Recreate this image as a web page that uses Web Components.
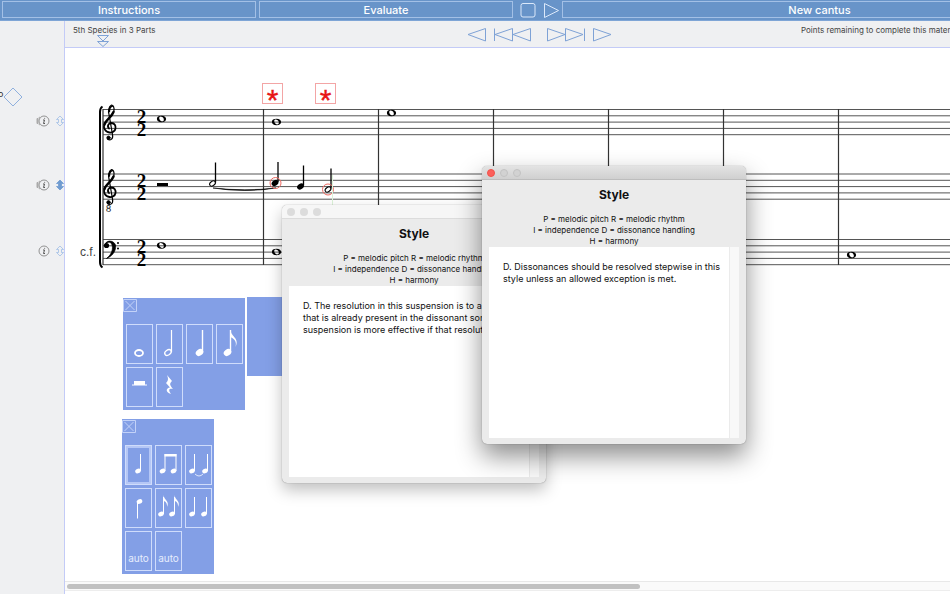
<!DOCTYPE html>
<html lang="en">
<head>
<meta charset="utf-8">
<title>5th Species in 3 Parts</title>
<style>
  html, body { height: 100%; }
  body {
    margin: 0;
    overflow: hidden;
    background: #fff;
    color: #111;
    font-family: Inter, "Liberation Sans", sans-serif;
  }
</style>
</head>
<body>
<counterpoint-app>
  <tool-bar slot="toolbar"></tool-bar>
  <part-rail slot="rail"></part-rail>
  <exercise-header slot="header" heading="5th Species in 3 Parts">Points remaining to complete this material: 20</exercise-header>
  <score-sheet slot="canvas"></score-sheet>
  <note-palette slot="canvas" class="durations" columns="4" label="Durations" items="whole half quarter eighth rest-half rest-quarter"></note-palette>
  <note-palette slot="canvas" class="options" columns="3" label="Options" selected="stem-up" items="stem-up beam tie stem-down flags pair auto auto"></note-palette>
  <style-window slot="canvas" class="first">D. The resolution in this suspension is to a pitch that is already present in the dissonant sonority. A suspension is more effective if that resolution fits.</style-window>
  <style-window slot="canvas" class="second" active>D. Dissonances should be resolved stepwise in this style unless an allowed exception is met.</style-window>
</counterpoint-app>

<script>
// app shell
class CounterpointApp extends HTMLElement {
  constructor() {
    super();
    this.attachShadow({ mode: 'open' });
    this.shadowRoot.innerHTML = `
      <style>
        :host { display: flex; flex-direction: column; height: 100vh; overflow: hidden; }
        .body { display: flex; flex: 1; min-height: 0; }
        main {
          display: flex;
          flex-direction: column;
          flex: 1;
          min-width: 0;
          border-left: 1px solid #c3cbf7;
        }
        .canvas { position: relative; flex: 1; min-height: 0; }
        .backdrop { position: absolute; left: 182px; top: 249px; width: 122px; height: 79px; background: #839fe6; }
        .track { height: 10px; padding: 2px; box-sizing: border-box; background: #fafafa; border-top: 1px solid #e8e8e8; border-bottom: 1px solid #ededed; margin-bottom: 3px; }
        .thumb { width: 65%; height: 5px; border-radius: 3px; background: #c1c1c1; }
        ::slotted(*) { flex: none; }
        ::slotted(note-palette), ::slotted(style-window) { position: absolute; }
        ::slotted(.durations) { left: 58px; top: 250px; }
        ::slotted(.options) { left: 57px; top: 371px; }
        ::slotted(.first) { left: 217px; top: 157px; }
        ::slotted(.second) { left: 417px; top: 118px; }
      </style>
      <slot name="toolbar"></slot>
      <div class="body">
        <slot name="rail"></slot>
        <main>
          <slot name="header"></slot>
          <div class="canvas">
            <div class="backdrop"></div>
            <slot name="canvas"></slot>
          </div>
          <div class="track"><div class="thumb"></div></div>
        </main>
      </div>
    `;
  }
}

// blue bar across the top
class ToolBar extends HTMLElement {
  constructor() {
    super();
    this.attachShadow({ mode: 'open' });
    this.shadowRoot.innerHTML = `
      <style>
        :host {
          display: flex;
          gap: 3px;
          height: 21px;
          padding: 1px 2px 2px;
          box-sizing: border-box;
          background: #6894c9;
          border-bottom: 1px solid #7ea5d6;
        }
        button {
          flex: none;
          box-sizing: border-box;
          width: 254px;
          padding: 1px 0 0;
          border: 1px solid #a3c0e6;
          background: none;
          color: #fff;
          font: 500 11px/14px Inter, sans-serif;
        }
        .wide { width: 515px; }
        .icon { display: flex; width: 24px; padding: 0; border: 0; justify-content: center; align-items: center; }
        .play { width: 16px; }
        svg { display: block; flex: none; fill: none; stroke: #dbe8fa; }
      </style>
      <button>Instructions</button>
      <button>Evaluate</button>
      <button class="icon" aria-label="Stop"><svg width="16" height="16"><rect x="1" y="1.500" width="14" height="13.500" rx="2"/></svg></button>
      <button class="icon play" aria-label="Play"><svg width="16" height="16"><path d="M1.500 1.500L15.500 8.500L1.500 15.500Z"/></svg></button>
      <button class="wide">New cantus</button>
    `;
  }
}

// left column with the controls of each part
class PartRail extends HTMLElement {
  constructor() {
    super();
    this.attachShadow({ mode: 'open' });
    const row = (speaker, on) => `
      <div class="row">
        <button aria-label="Part info">
          <svg width="14" height="14" fill="none" stroke="#929292">
            ${speaker ? '<path d="M1 4.500H2V9.500H1ZM2.500 4L4 3M2.500 10L4 11" stroke="#aaa" fill="#aaa"/>' : ''}
            <circle cx="8" cy="7" r="5"/>
            <path d="M7 6H8.500L7.500 9.500H9" stroke="#555"/><circle cx="8.700" cy="4.200" r=".5" fill="#555" stroke="none"/>
          </svg>
        </button>
        <button aria-label="Select part">
          <svg width="8" height="12" fill="${on ? '#6f9bd0' : 'none'}" stroke="${on ? '#6f9bd0' : '#a0bee6'}" stroke-width=".8">
            <path d="M4 1L7.500 4.500H5.500V7.500H7.500L4 11L.5 7.500H2.500V4.500H.5Z"/>
          </svg>
        </button>
      </div>`;
    this.shadowRoot.innerHTML = `
      <style>
        :host {
          display: grid;
          grid-template-rows: 24px 64px 66px 24px;
          align-content: start;
          width: 64px;
          padding-top: 64px;
          box-sizing: border-box;
          background: #eff0f2;
          overflow: hidden;
        }
        .row { display: flex; align-items: center; justify-content: flex-end; gap: 6px; height: 24px; }
        button { display: block; padding: 0; border: 0; background: none; }
        svg { display: block; }
      </style>
      <svg width="24" height="24">
        <text x="-2" y="12" font-family="Inter, sans-serif" font-size="9" fill="#333">o</text>
        <path d="M4 12L13 3L22 12L13 21Z" fill="none" stroke="#8fb0de"/>
      </svg>
      ${row(true, false)}${row(true, true)}${row(false, false)}
    `;
  }
}

class ExerciseHeader extends HTMLElement {
  constructor() {
    super();
    this.attachShadow({ mode: 'open' });
    this.shadowRoot.innerHTML = `
      <style>
        :host {
          display: grid;
          grid-template-columns: 396px 340px 220px;
          height: 27px;
          box-sizing: border-box;
          border-bottom: 1px solid #c3cbf7;
          background: #eff0f2;
          color: #444;
          font-size: 8px;
          line-height: 10px;
          white-space: nowrap;
          overflow: hidden;
        }
        .title { padding: 4px 0 0 8px; }
        .title svg { margin-left: 24px; }
        nav { display: flex; padding: 6px 0 0 6px; gap: 6px; }
        nav button:nth-child(3) { margin-left: 7px; }
        .points { padding-top: 4px; }
        button { padding: 0; border: 0; background: none; height: 16px; }
        svg { display: block; fill: none; stroke: #7ea2d6; }
      </style>
      <div class="title">${this.getAttribute('heading')}
        <svg width="14" height="12"><path d="M.5 .5H11.500L6 6ZM.5 6.500H11.500L6 11.500Z"/></svg>
      </div>
      <nav>
        <button aria-label="Back"><svg width="20" height="16"><path d="M18.500 1.500V14L1 7.500Z"/></svg></button>
        <button aria-label="To start"><svg width="40" height="16"><path d="M1.500 1.500V14M19.500 1.500V14L2 7.500ZM37.500 1.500V14L20 7.500Z"/></svg></button>
        <button aria-label="To end"><svg width="40" height="16"><path d="M1.500 1.500V14L19 7.500ZM19.500 1.500V14L37 7.500ZM38.500 1.500V14"/></svg></button>
        <button aria-label="Forward"><svg width="20" height="16"><path d="M1.500 1.500V14L19 7.500Z"/></svg></button>
      </nav>
      <div class="points"><slot></slot></div>
    `;
  }
}

// three staves; drawn in window coordinates, shifted by the view box
class ScoreSheet extends HTMLElement {
  constructor() {
    super();
    this.attachShadow({ mode: 'open' });

    const staves = [109.5, 174, 239.5];
    const lines = staves.map(top => [0, 1, 2, 3, 4].map(i => {
      const y = top + i * 6.3;
      return `<path d="M103 ${y}H1265"/>`;
    }).join('')).join('');
    const bars = [263.5, 378.5, 493.5, 608.5, 723.5, 838.5, 953.5].map(x => `<path d="M${x} 109V265"/>`).join('');

    const whole = (x, y) => `
      <g transform="translate(${x} ${y})">
        <path fill-rule="evenodd" d="M-4.600 0C-4.600-2-3-3.200 0-3.200C3-3.200 4.600-1.800 4.600 0C4.600 2 3 3.200 0 3.200C-3 3.200-4.600 2-4.600 0ZM-1.700-2.200C-3.200-1-1.500 2.300.6 2.500C3.200 2.600 2.600-1 .8-2C0-2.600-1-2.700-1.700-2.200Z"/>
      </g>`;
    const note = (x, y, open) => `
      <ellipse cx="${x}" cy="${y}" rx="${open ? 3.2 : 3.7}" ry="${open ? 2.1 : 2.6}" transform="rotate(-35 ${x} ${y})" ${open ? 'fill="none" stroke="#000"' : ''}/>
      <path d="M${x + 3} ${y - 1}V${y - 21}" stroke="#000" stroke-width="1.300"/>`;
    const treble = y => `
      <g transform="translate(0 ${y})" fill="none" stroke="#000" stroke-linecap="round">
        <path d="M109 54C106.500 51 109 48.500 111.500 48.500C114.500 48.700 116 51 115.500 54C115 57 112 58.500 109.500 58C105 57.500 103 53 104.500 49.500" stroke-width="1.800"/>
        <path d="M104.500 50C105.500 45 111.500 43 113.500 37.500" stroke-width="2.400"/>
        <path d="M113.800 37C114.800 33 113 30.500 111.500 30.500C108.500 32 108 37 109 40L112.500 60C113.500 65 110 66.500 107.500 64.500" stroke-width="1.200"/>
        <path d="M112.500 31.500C110.500 32 109.300 34 109.300 37" stroke-width="1.700"/>
        <circle cx="108.500" cy="63.300" r="1.700" fill="#000" stroke-width=".8"/>
      </g>`;
    const time = y => `<text x="141.500" y="${y + 13}">2</text><text x="141.500" y="${y + 26}">2</text>`;
    const mark = x => `
      <rect x="${x}.5" y="83.500" width="20" height="20" fill="#fff" stroke="#f3a5a5"/>
      <text x="${x + 10.500}" y="110" font-family="Liberation Sans, sans-serif" font-size="30" text-anchor="middle" fill="#e81616" stroke="#e81616" stroke-width=".4">*</text>`;

    this.shadowRoot.innerHTML = `
      <style>
        :host { display: block; height: 100%; overflow: hidden; }
        svg { display: block; }
      </style>
      <svg width="1200" height="534" viewBox="65 48 1200 534" role="img" aria-label="Score">
        <g fill="none" stroke="#555">${lines}</g>
        <g fill="none" stroke="#333" stroke-width="1.200">${bars}<path d="M103 109V265"/></g>
        <path d="M102.500 106.500Q100 108 100 112V262Q100 266 102.500 267.500" fill="none" stroke="#000" stroke-width="2"/>
        ${treble(74.5)}${treble(139)}
        <text x="108.500" y="212" font-family="Inter, sans-serif" font-size="9" text-anchor="middle" fill="#222">8</text>
        <path d="M105 245.500C105 240 113.500 239.500 115.500 245C116.500 251.500 111.500 256.500 106.500 258.500C111 255 113 250.500 112.300 246C111.500 241.500 107.500 240.500 105 245.500Z" stroke="#000" stroke-width=".7"/>
        <circle cx="106.500" cy="245.500" r="2.600"/><circle cx="118" cy="243" r="1"/><circle cx="118" cy="248.500" r="1"/>
        <g font-family="Liberation Serif, serif" font-size="19" font-weight="700" text-anchor="middle">
          ${staves.map(time).join('')}
        </g>
        <text x="80" y="256" font-family="Liberation Sans, sans-serif" font-size="12" fill="#444">c.f.</text>
        ${whole(161.5, 119)}${whole(276.5, 122)}${whole(391.5, 113)}
        ${whole(161.5, 245.5)}${whole(276.5, 252)}${whole(851.5, 255)}
        <rect x="157" y="183" width="11" height="3"/>
        ${note(212.5, 183.5, true)}${note(275, 183, false)}${note(300.5, 186.5, false)}${note(328, 189.5, true)}
        <path d="M213 188Q245 193 276 188Q245 191.500 213 188Z" stroke="#000" stroke-width=".6"/>
        <g fill="none" stroke="#ee6a62"><circle cx="275.500" cy="183" r="5.500"/><circle cx="328" cy="189.500" r="5.500"/></g>
        <path d="M332.500 175V210" stroke="#dcf3d8"/>
        ${mark(262)}${mark(315)}
      </svg>
    `;
  }
}

const head = (x, y) => `<ellipse cx="${x}" cy="${y}" rx="2.900" ry="2.300" transform="rotate(-25 ${x} ${y})"/>`;
const stem = (x, y, h) => `<path d="M${x} ${y}v${h}" stroke="#fff"/>`;
const small = (x, y) => head(x, y) + stem(x + 2.5, y, -17);

// glyphs on a 25 x 38 tile
const GLYPHS = {
  'whole': '<ellipse cx="12" cy="28" rx="4" ry="3" fill="none" stroke="#fff" stroke-width="1.800"/>',
  'half': '<ellipse cx="11" cy="27.500" rx="3.500" ry="2.500" transform="rotate(-35 11 27.500)" fill="none" stroke="#fff" stroke-width="1.300"/><path d="M14.500 27V5" stroke="#fff" stroke-width="1.200"/>',
  'quarter': '<ellipse cx="12.500" cy="27.500" rx="4" ry="3.200" transform="rotate(-35 12.500 27.500)"/><path d="M15.500 27V5" stroke="#fff" stroke-width="1.400"/>',
  'eighth': '<ellipse cx="10.500" cy="27.500" rx="4" ry="3.200" transform="rotate(-35 10.500 27.500)"/><path d="M13.500 27V5" stroke="#fff" stroke-width="1.400"/><path d="M13.500 5C14 12 23 13 18.500 22C20 16 17 14 13.500 12Z"/>',
  'rest-half': '<path d="M7 13H18V16.500H20V17.500H5V16.500H7Z"/>',
  'rest-quarter': '<path d="M10 7L15 13C12 16 13 17 16 21C12 20 11 22 14 26C8 24 9 20 13 19.500L9 15C12 12 11 10 10 7Z"/>',
  'stem-up': small(12, 25),
  'beam': small(6.5, 25) + small(17.5, 25) + '<path d="M8.500 8H20.500V10.500H8.500Z"/>',
  'tie': small(6, 25) + small(19, 25) + '<path d="M9 28Q13 32 17 28" fill="none" stroke="#dfe8fc"/>',
  'stem-down': head(13.5, 12.5) + stem(11.5, 12.5, 17),
  'flags': small(5, 25) + small(16, 25) + '<path d="M7.500 6C8 11 14 12 11 18C11.500 14 9 12 7.500 12ZM18.500 6C19 11 25 12 22 18C22.500 14 20 12 18.500 12Z"/>',
  'pair': small(6, 25) + small(18, 25)
};

class NotePalette extends HTMLElement {
  constructor() {
    super();
    this.attachShadow({ mode: 'open' });
  }

  connectedCallback() {
    const selected = this.getAttribute('selected');
    const cells = this.getAttribute('items').split(' ').map(name => {
      if (!GLYPHS[name]) return `<button class="cell">${name}</button>`;
      const cls = name === selected ? 'cell selected' : 'cell';
      return `<button class="${cls}" aria-label="${name}"><svg width="25" height="38" fill="#fff">${GLYPHS[name]}</svg></button>`;
    }).join('');
    this.shadowRoot.innerHTML = `
      <style>
        :host { display: block; padding: 0 2px 3px 3px; background: #839fe6; }
        .close { display: block; height: 26px; margin-left: -3px; padding: 0 0 12px; border: 0; background: none; }
        .grid { display: grid; grid-template-columns: repeat(${this.getAttribute('columns')}, 27px); gap: 3px; }
        .cell {
          display: flex;
          align-items: flex-end;
          justify-content: center;
          box-sizing: border-box;
          height: 40px;
          padding: 0;
          border: 1px solid #cfdcfb;
          background: none;
          color: #e6edfd;
          font: 10px/12px Inter, sans-serif;
        }
        .cell:not([aria-label]) { padding-bottom: 6px; }
        .selected { box-shadow: inset 0 0 0 2px #b5c7f6; }
        svg { display: block; }
      </style>
      <button class="close" aria-label="Close ${this.getAttribute('label')}">
        <svg width="14" height="14" fill="none" stroke="#c3d2f8"><path d="M.5 1.500H13.500V13.500H.5ZM2.500 3L11.500 12M11.500 3L2.500 12"/></svg>
      </button>
      <div class="grid">${cells}</div>
    `;
  }
}

class StyleWindow extends HTMLElement {
  constructor() {
    super();
    this.attachShadow({ mode: 'open' });
    this.shadowRoot.innerHTML = `
      <style>
        :host {
          display: block;
          width: 264px;
          box-sizing: border-box;
          padding-bottom: 6px;
          border-radius: 5px;
          background: #ebebeb;
          color: #111;
          box-shadow: 0 0 1px rgba(0, 0, 0, .5), 0 7px 16px rgba(0, 0, 0, .25);
          overflow: hidden;
        }
        :host([active]) { box-shadow: 0 0 1px rgba(0, 0, 0, .5), 0 12px 26px rgba(0, 0, 0, .45); }
        .bar { display: flex; align-items: center; gap: 5px; box-sizing: border-box; height: 14px; padding: 0 5px; background: #f6f6f6; border-bottom: 1px solid #dcdcdc; }
        :host([active]) .bar { background: linear-gradient(#e3e3e3, #d0d0d0); border-color: #bdbdbd; }
        .bar button { box-sizing: border-box; width: 8px; height: 8px; padding: 0; border: 0; border-radius: 50%; background: #dcdcdc; }
        :host([active]) .bar button { border: 1px solid #c2c2c2; background: #d2d2d2; }
        :host([active]) .bar .close { border-color: #f0524a; background: #fc605b; }
        h1 { margin: 0; padding: 7px 0 11px; font-size: 12px; line-height: 16px; text-align: center; }
        .legend { margin: 0; font-size: 8px; line-height: 11px; text-align: center; }
        .view { display: flex; height: 191px; margin: 0 7px; background: #fff; }
        .text { flex: 1; padding: 14px 6px 0 14px; font-size: 9px; line-height: 12px; }
        .scroll { width: 9px; border-left: 1px solid #ebebeb; background: #f8f8f8; }
      </style>
      <div class="bar">
        <button class="close" aria-label="Close"></button>
        <button aria-label="Minimize"></button>
        <button aria-label="Zoom"></button>
      </div>
      <h1>Style</h1>
      <p class="legend">P = melodic pitch R = melodic rhythm<br>I = independence D = dissonance handling<br>H = harmony</p>
      <div class="view">
        <div class="text"><slot></slot></div>
        <div class="scroll"></div>
      </div>
    `;
  }
}

customElements.define('counterpoint-app', CounterpointApp);
customElements.define('tool-bar', ToolBar);
customElements.define('part-rail', PartRail);
customElements.define('exercise-header', ExerciseHeader);
customElements.define('score-sheet', ScoreSheet);
customElements.define('note-palette', NotePalette);
customElements.define('style-window', StyleWindow);
</script>
</body>
</html>
